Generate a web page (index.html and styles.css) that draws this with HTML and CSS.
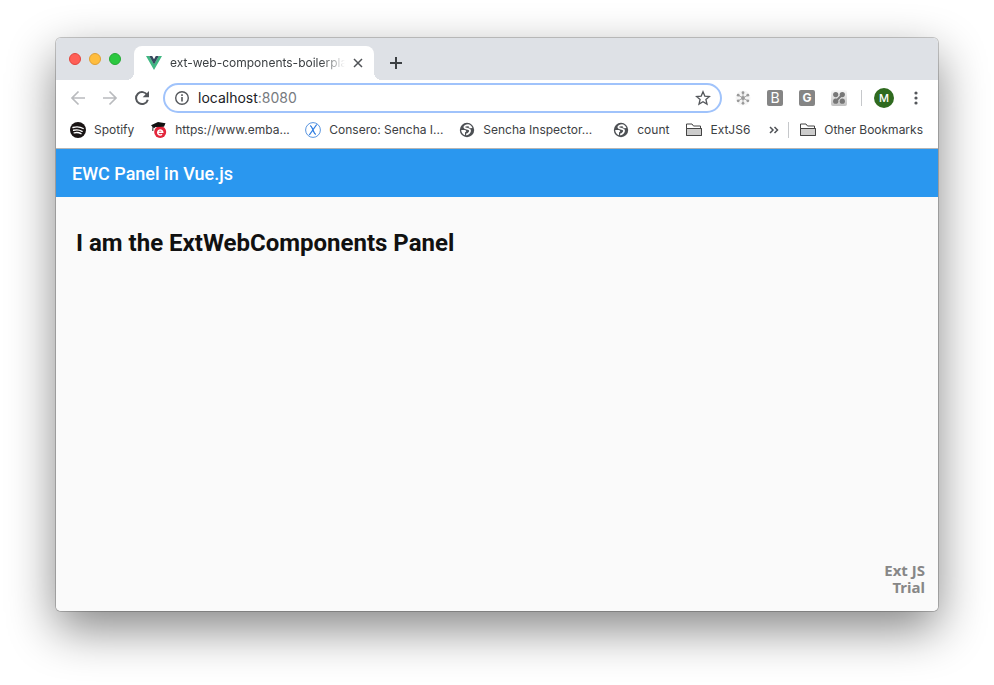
FILE: index.html
```html
<!DOCTYPE html>
<html lang="en">
<head>
<meta charset="utf-8">
<meta name="viewport" content="width=device-width, initial-scale=1">
<title>ext-web-components-boilerplate</title>
<link rel="stylesheet" href="styles.css">
</head>
<body>
<svg class="defs" width="0" height="0" aria-hidden="true">
  <symbol id="globe" viewBox="0 0 16 16"><circle cx="8" cy="8" r="7.200" fill="#4d5054"/><path d="M10.200 3.300C7 3 5 4 5.400 5.400c.4 1.300 5.400 1 5.600 3 .2 1.700-1.200 3.300-3.800 4.300" fill="none" stroke="#fff" stroke-width="1.800"/><path d="M2.200 8h3.600c1 .2 1.400.8 1.400 1.600L6 10.400v2.800C3.800 12.600 2.200 10.600 2.200 8z" fill="#fff"/><path d="M10 2.600c1.600.6 2.800 1.800 3.400 3.400l-2.200.2-1.600-1z" fill="#fff"/></symbol>
  <symbol id="folder" viewBox="0 0 16 16"><path d="M.5 13.500v-11.500H6l1.500 2h7v2.500h1v7z" fill="#fff" stroke="#444"/><path d="M.5 6.500h15v7H.5z" fill="#ccc" stroke="#444"/></symbol>
</svg>
<div class="window">
  <div class="tabstrip">
    <div class="lights">
      <button class="light red" aria-label="Close window"></button>
      <button class="light yellow" aria-label="Minimise window"></button>
      <button class="light green" aria-label="Zoom window"></button>
    </div>
    <div class="tab">
      <svg class="icon" width="16" height="16" viewBox="0 0 16 16"><path fill="#41b883" d="M0 1h3.200L8 9.300 12.800 1H16L8 15z"/><path fill="#35495e" d="M3.200 1h3L8 4.200 9.800 1h3L8 9.500z"/></svg>
      <span class="tab-title">ext-web-components-boilerpla</span>
      <button class="tab-close" aria-label="Close tab"><svg width="10" height="10" viewBox="0 0 10 10"><path d="M1 1l8 8M9 1L1 9" stroke="#505357" stroke-width="1.500"/></svg></button>
    </div>
    <button class="new-tab" aria-label="New tab"><svg width="12" height="12" viewBox="0 0 12 12"><path d="M6 0v12M0 6h12" stroke="#3c4043" stroke-width="2"/></svg></button>
  </div>

  <div class="toolbar">
    <button class="nav" aria-label="Back"><svg width="16" height="16" viewBox="0 0 16 16"><path d="M15 8H2M8.500 1.500L2 8l6.500 6.500" fill="none" stroke="#b9bbbe" stroke-width="1.700"/></svg></button>
    <button class="nav" aria-label="Forward"><svg width="16" height="16" viewBox="0 0 16 16"><path d="M1 8h13M7.500 1.500L14 8l-6.500 6.500" fill="none" stroke="#b9bbbe" stroke-width="1.700"/></svg></button>
    <button class="nav" aria-label="Reload"><svg width="16" height="16" viewBox="0 0 16 16"><path d="M13.300 5.200A6 6 0 1 0 13.800 9.700" fill="none" stroke="#54575b" stroke-width="2"/><path d="M15 1v6.300H8.700z" fill="#54575b"/></svg></button>
    <div class="omnibox">
      <svg class="icon" width="16" height="16" viewBox="0 0 16 16"><circle cx="8" cy="8" r="6.300" fill="none" stroke="#54575b" stroke-width="1.400"/><path d="M8 7v4.500M8 4.300v1.600" stroke="#54575b" stroke-width="1.600"/></svg>
      <a class="url" href="#">localhost<span class="port">:8080</span></a>
      <button class="star" aria-label="Bookmark this page"><svg width="16" height="16" viewBox="0 0 16 16"><path d="M8 1.800l1.800 4.300 4.700.4-3.600 3 1.100 4.600L8 11.700l-4 2.400 1.100-4.600-3.600-3 4.700-.4z" fill="none" stroke="#54575b" stroke-width="1.300"/></svg></button>
    </div>
    <div class="extensions">
      <button class="ext" aria-label="Snowflake extension"><svg width="16" height="16" viewBox="0 0 16 16"><circle cx="8" cy="8" r="7.500" fill="#f5f5f5"/><path d="M8 2.500v11M3.200 5.200l9.600 5.600M12.800 5.200l-9.600 5.600" stroke="#aaa" stroke-width="1"/><g fill="#999"><circle cx="8" cy="2.700" r="1.400"/><circle cx="8" cy="13.300" r="1.400"/><circle cx="3.200" cy="5.200" r="1.400"/><circle cx="12.800" cy="10.800" r="1.400"/><circle cx="12.800" cy="5.200" r="1.400"/><circle cx="3.200" cy="10.800" r="1.400"/><circle cx="8" cy="8" r="1.900"/></g></svg></button>
      <button class="ext tile thin">B</button>
      <button class="ext tile">G</button>
      <button class="ext" aria-label="Clover extension"><svg width="16" height="16" viewBox="0 0 16 16"><defs><linearGradient id="tile" x2="0" y2="1"><stop stop-color="#f8f8f8"/><stop offset="1" stop-color="#c0c0c0"/></linearGradient></defs><rect width="16" height="16" rx="2" fill="url(#tile)"/><path d="M5 11l6-6" stroke="#777" stroke-width="2"/><g fill="#777"><circle cx="4.700" cy="4.600" r="2.600"/><circle cx="11.300" cy="4.600" r="2.600"/><circle cx="4.700" cy="11.200" r="2.600"/><circle cx="11.300" cy="11.200" r="2.600"/></g></svg></button>
    </div>
    <span class="divider"></span>
    <button class="avatar" aria-label="Profile M">M</button>
    <button class="menu" aria-label="Menu"><svg width="4" height="16" viewBox="0 0 4 16"><g fill="#54575b"><circle cx="2" cy="3" r="1.600"/><circle cx="2" cy="8" r="1.600"/><circle cx="2" cy="13" r="1.600"/></g></svg></button>
  </div>

  <nav class="bookmarks">
    <a href="#"><svg width="16" height="16" viewBox="0 0 16 16"><circle cx="8" cy="8" r="8" fill="#191414"/><path d="M3 5.500c3.500-1 7.200-.7 10.200 1M3.600 8.300c3-.8 6-.5 8.500 1M4.200 10.900c2.400-.6 4.700-.4 6.800.8" fill="none" stroke="#fff" stroke-width="1.400" stroke-linecap="round"/></svg><span>Spotify</span></a>
    <a href="#"><svg width="16" height="16" viewBox="0 0 16 16"><circle cx="9.200" cy="10" r="6" fill="#e3263b"/><path d="M6.700 10.200h5a2.500 2.500 0 1 0-.7 2" fill="none" stroke="#fff" stroke-width="1.500"/><path d="M0 3.300L7 0l7.500 1.300L13 4.700 4.500 5 3 6.200z" fill="#111"/><path d="M2 4l-.2 5" stroke="#222" stroke-width="1"/></svg><span class="clipped">https://www.emba...</span></a>
    <a href="#"><svg width="16" height="16" viewBox="0 0 16 16"><circle cx="8" cy="8" r="7.400" fill="#fff" stroke="#5b96df" stroke-width="1"/><path d="M5 3.700c1.500 0 2 2 3 4.300s1.500 4.300 3 4.300M11.700 2.500L4.300 13" fill="none" stroke="#2f7de1" stroke-width="1.300"/></svg><span class="clipped">Consero: Sencha I...</span></a>
    <a href="#"><svg width="16" height="16"><use href="#globe"/></svg><span class="clipped">Sencha Inspector...</span></a>
    <a href="#"><svg width="16" height="16"><use href="#globe"/></svg><span>count</span></a>
    <a href="#"><svg width="16" height="16"><use href="#folder"/></svg><span>ExtJS6</span></a>
    <button class="more" aria-label="More bookmarks"><svg width="10" height="8" viewBox="0 0 10 8"><path d="M1 1l3 3-3 3M5.500 1l3 3-3 3" fill="none" stroke="#505357" stroke-width="1.500"/></svg></button>
    <span class="divider"></span>
    <a href="#"><svg width="16" height="16"><use href="#folder"/></svg><span>Other Bookmarks</span></a>
  </nav>

  <header class="panel-header">EWC Panel in Vue.js</header>
  <main class="panel-body">
    <h1>I am the ExtWebComponents Panel</h1>
    <div class="trial"><div>Ext JS</div><div>Trial</div></div>
  </main>
</div>
</body>
</html>
```

FILE: styles.css
```css
* { box-sizing: border-box; }

body {
  margin: 0;
  min-height: 100vh;
  padding: 38px 56px 74px;
  display: flex;
  background: #fff;
  font: 12px/16px Inter, "Liberation Sans", sans-serif;
  color: #3c4043;
}

button {
  padding: 0;
  border: 0;
  background: none;
  font: inherit;
  color: inherit;
  display: flex;
  align-items: center;
  justify-content: center;
  flex: none;
}

a { color: inherit; text-decoration: none; }
svg { display: block; flex: none; }
.defs { position: absolute; }

.window {
  flex: 1;
  min-width: 0;
  display: flex;
  flex-direction: column;
  border-radius: 5px;
  overflow: hidden;
  background: #fff;
  box-shadow: 0 0 0 1px rgba(0, 0, 0, .2), 0 18px 48px rgba(0, 0, 0, .48);
}

.tabstrip {
  height: 42px;
  display: flex;
  align-items: flex-end;
  background: #dee1e6;
}

.lights {
  display: flex;
  align-items: center;
  gap: 8px;
  height: 42px;
  padding-left: 13px;
  width: 78px;
}

.light { width: 12px; height: 12px; border-radius: 50%; border: 1px solid; }
.red { background: #ff5f57; border-color: #e2463f; }
.yellow { background: #ffbd3e; border-color: #dfa035; }
.green { background: #2bc840; border-color: #24a935; }

.tab {
  position: relative;
  width: 240px;
  height: 34px;
  padding: 0 11px 0 12px;
  display: flex;
  align-items: center;
  gap: 8px;
  background: #fff;
  border-radius: 8px 8px 0 0;
}

.tab::before,
.tab::after {
  content: "";
  position: absolute;
  bottom: 0;
  width: 8px;
  height: 8px;
}
.tab::before { right: 100%; background: radial-gradient(circle at 0 0, transparent 8px, #fff 8px); }
.tab::after { left: 100%; background: radial-gradient(circle at 100% 0, transparent 8px, #fff 8px); }

.tab-title {
  flex: 1;
  min-width: 0;
  overflow: hidden;
  white-space: nowrap;
  -webkit-mask-image: linear-gradient(to left, transparent, #000 24px);
  mask-image: linear-gradient(to left, transparent, #000 24px);
}

.new-tab { width: 28px; height: 34px; margin-left: 8px; }

.toolbar {
  height: 36px;
  padding: 0 20px 0 14px;
  display: flex;
  align-items: center;
}

.nav { width: 16px; margin-right: 16px; }
.nav + .nav + .nav { margin-right: 13px; }

.omnibox {
  flex: 1;
  height: 30px;
  padding: 0 9px;
  display: flex;
  align-items: center;
  gap: 8px;
  border: 2px solid #a0c3fb;
  border-radius: 15px;
}

.url { flex: 1; font-size: 14px; color: #202124; }
.port { color: #777b80; }

.extensions { display: flex; gap: 16px; margin-left: 13px; }
.ext { width: 16px; height: 16px; }
.tile { background: #858585; border-radius: 2px; color: #fff; font-size: 12px; font-weight: 700; }
.thin { font-size: 14px; font-weight: 400; }

.divider { width: 1px; height: 16px; background: #c6c8cb; margin: 0 12px 0 14px; }

.avatar {
  width: 20px;
  height: 20px;
  border-radius: 50%;
  background: #2f6a1f;
  color: #fff;
  font-size: 11px;
  font-weight: 500;
}
.menu { margin-left: 20px; }

.bookmarks {
  height: 33px;
  padding: 0 15px 4px 14px;
  display: flex;
  align-items: center;
  border-bottom: 1px solid #b5b5b5;
  white-space: nowrap;
}
.bookmarks a { display: flex; align-items: center; gap: 8px; margin-right: 17px; }
.bookmarks a:last-child { margin-right: 0; }
.clipped { width: 113px; }
.more { margin-left: auto; }
.bookmarks .divider { margin: 0 11px 0 9px; }

.panel-header {
  height: 48px;
  padding: 0 16px;
  background: #2a97ef;
  color: #fff;
  font: 500 18px/49px Roboto, sans-serif;
}

.panel-body {
  flex: 1;
  padding: 30px 13px 15px 20px;
  display: flex;
  flex-direction: column;
  justify-content: space-between;
  background: #fafafa;
}

h1 {
  margin: 0;
  font: 700 24px/32px Roboto, sans-serif;
  color: #111;
}

.trial {
  text-align: right;
  font: 700 15px/17px "Noto Sans", "Open Sans", sans-serif;
  color: #878787;
}
```
